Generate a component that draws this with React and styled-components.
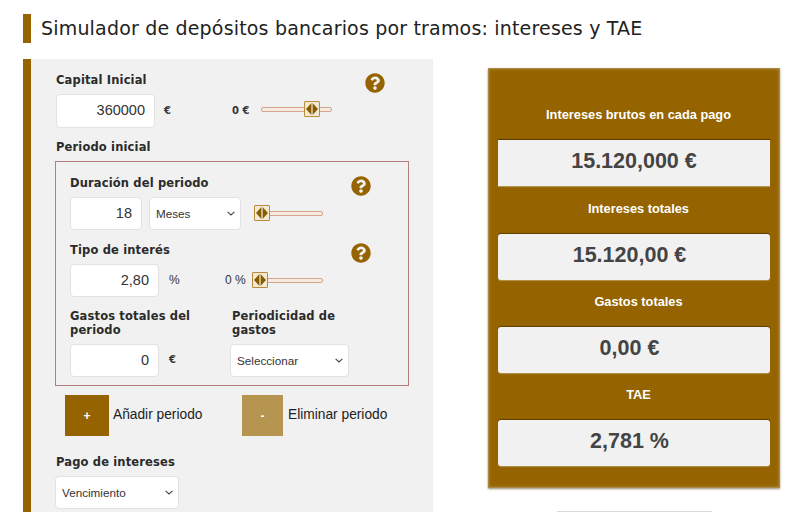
import styled, { createGlobalStyle } from "styled-components";
import { FaQuestionCircle } from "react-icons/fa";

const chevron =
  "data:image/svg+xml,%3Csvg xmlns='http://www.w3.org/2000/svg' width='8' height='5' viewBox='0 0 8 5'%3E%3Cpath d='M.6.8 4 4 7.4.8' fill='none' stroke='%23444' stroke-width='1.1'/%3E%3C/svg%3E";

const GlobalStyle = createGlobalStyle`
  html, body {
    margin: 0;
    padding: 0;
    background: #fff;
    overflow: hidden;
  }
  * { box-sizing: border-box; }
`;

const Page = styled.div`
  width: 800px;
  height: 512px;
  overflow: hidden;
  padding: 14px 0 0 23px;
  font-family: "DejaVu Sans", Verdana, sans-serif;
  color: #222;
`;

const Title = styled.h1`
  margin: 0 0 16px;
  height: 29px;
  border-left: 8px solid #956400;
  padding-left: 10px;
  font-size: 19px;
  font-weight: 400;
  line-height: 29px;
  letter-spacing: 0.18px;
  color: #222;
  white-space: nowrap;
`;

const Columns = styled.div`
  display: flex;
  align-items: flex-start;
  gap: 55px;
`;

const FormPanel = styled.section`
  width: 410px;
  height: 460px;
  flex: none;
  border-left: 8px solid #956400;
  background: #f1f1f1;
  padding: 13px 0 0 25px;
`;

const Label = styled.div`
  height: 14px;
  padding-top: 2px;
  font-size: 11.5px;
  font-weight: 700;
  line-height: 12px;
  letter-spacing: 0.15px;
  color: #2b2b2b;
  margin-top: ${(p) => p.$top || 0}px;
  margin-bottom: 8px;
`;

const LabelHead = styled.div`
  display: flex;
  justify-content: space-between;
  align-items: center;
  height: 14px;
  padding-top: 2px;
  margin-top: ${(p) => p.$top || 0}px;
  margin-bottom: 8px;
  width: ${(p) => p.$width}px;
  font-size: 11.5px;
  font-weight: 700;
  letter-spacing: 0.15px;
  color: #2b2b2b;
`;

const Help = styled(FaQuestionCircle)`
  width: 20px;
  height: 20px;
  margin-top: 6px;
  flex: none;
  color: #956400;
`;

const Row = styled.div`
  display: flex;
  align-items: center;
  height: ${(p) => p.$height || 34}px;
`;

const NumberInput = styled.input`
  width: ${(p) => p.$width}px;
  height: 100%;
  flex: none;
  border: 1px solid #e2e2e2;
  border-radius: 4px;
  background: #fff;
  padding: 0 9px 2px;
  text-align: right;
  font-family: "Liberation Sans", Arial, sans-serif;
  font-size: 14.5px;
  color: #333;
  outline: none;
`;

const Unit = styled.span`
  flex: none;
  width: ${(p) => p.$width}px;
  margin-left: ${(p) => p.$left || 0}px;
  margin-top: -2px;
  font-family: ${(p) => (p.$plain ? '"Liberation Sans", Arial, sans-serif' : "inherit")};
  font-size: ${(p) => (p.$plain ? 12 : 10)}px;
  font-weight: ${(p) => (p.$plain ? 400 : 700)};
  color: #333;
  white-space: nowrap;
`;

const SelectBox = styled.select`
  appearance: none;
  width: ${(p) => p.$width}px;
  height: ${(p) => p.$height || 33}px;
  flex: none;
  margin-left: ${(p) => p.$left || 0}px;
  border: 1px solid #e2e2e2;
  border-radius: 4px;
  background: #fff url("${chevron}") no-repeat right 5px center;
  padding: 0 14px 0 6px;
  font-family: "Liberation Sans", Arial, sans-serif;
  font-size: 11.7px;
  color: #333;
  outline: none;
`;

const SliderWrap = styled.div`
  position: relative;
  flex: none;
  width: ${(p) => p.$width}px;
  height: 16px;
  margin-left: ${(p) => p.$left || 0}px;
  margin-top: ${(p) => p.$top ?? -2}px;
`;

const SliderTrack = styled.div`
  position: absolute;
  left: 0;
  right: 0;
  top: 6px;
  height: 5px;
  border: 1px solid #d3a58c;
  border-radius: 2px;
  background: #f6e9e0;
`;

const SliderThumb = styled.div`
  position: absolute;
  left: ${(p) => p.$at}px;
  top: 0;
  width: 16px;
  height: 16px;
  border: 1px solid #b98a3a;
  border-radius: 1px;
  background: #f3ead6;
  display: flex;
  align-items: center;
  justify-content: center;
`;

const PeriodBox = styled.div`
  width: 354px;
  margin: 0 0 0 -1px;
  border: 1px solid #b77d7d;
  padding: 13px 0 8px 14px;
`;

const TwoCols = styled.div`
  display: grid;
  grid-template-columns: 160px 119px;
  margin-top: 11px;
`;

const ColLabel = styled.div`
  height: 28px;
  padding-top: 1px;
  font-size: 11.5px;
  font-weight: 700;
  line-height: 14px;
  letter-spacing: 0.15px;
  color: #2b2b2b;
  margin: 0 0 8px ${(p) => p.$left || 0}px;
`;

const Actions = styled.div`
  display: flex;
  align-items: center;
  height: 41px;
  margin: 9px 0 18px 9px;
`;

const SquareButton = styled.button`
  width: ${(p) => p.$width}px;
  height: 41px;
  flex: none;
  border: none;
  padding: 0;
  background: ${(p) => p.$bg};
  color: #fff;
  font-family: "Liberation Sans", Arial, sans-serif;
  font-size: 12px;
  font-weight: 700;
`;

const ActionLabel = styled.span`
  flex: none;
  width: ${(p) => p.$width}px;
  margin-left: ${(p) => p.$left}px;
  margin-top: -3px;
  font-family: "Liberation Sans", Arial, sans-serif;
  font-size: 13.75px;
  color: #222;
  white-space: nowrap;
`;

const SidePanel = styled.div`
  flex: none;
  margin-top: 9px;
  width: 292px;
`;

const ResultCard = styled.aside`
  height: 420px;
  background: #956400;
  border: 1px solid #ab8a48;
  box-shadow: 0 1px 2px rgba(70, 45, 0, 0.55), inset 0 0 3px rgba(255, 255, 255, 0.25);
  padding: 36px 9px 0;
`;

const ResultLabel = styled.div`
  height: 20px;
  margin-bottom: 15px;
  padding-left: 9px;
  text-align: center;
  font-family: "Liberation Sans", Arial, sans-serif;
  font-size: 12.8px;
  font-weight: 700;
  line-height: 20px;
  color: #fff;
`;

const ResultValue = styled.div`
  height: 46px;
  margin-bottom: ${(p) => (p.$square ? 13 : 12)}px;
  padding-right: ${(p) => (p.$square ? 0 : 9)}px;
  border-radius: ${(p) => (p.$square ? 0 : 3)}px;
  background: #f1f1f1;
  box-shadow: 0 -1px 1px rgba(60, 40, 0, 0.6), 0 1px 1px rgba(255, 255, 255, 0.3);
  text-align: center;
  font-family: "Liberation Sans", Arial, sans-serif;
  font-size: 21.5px;
  font-weight: 700;
  line-height: 42px;
  color: #444;
`;

const NextBox = styled.div`
  width: 155px;
  height: 10px;
  margin: 23px 0 0 69px;
  border-top: 1px solid #d9d9d9;
`;

function Slider({ width, left, at, top }) {
  return (
    <SliderWrap $width={width} $left={left} $top={top}>
      <SliderTrack />
      <SliderThumb $at={at}>
        <svg width="12" height="12" viewBox="0 0 12 12">
          <path d="M5.4 0v12L0 6z" fill="#8a5c00" />
          <path d="M6.6 0v12L12 6z" fill="#8a5c00" />
        </svg>
      </SliderThumb>
    </SliderWrap>
  );
}

const results = [
  { label: "Intereses brutos en cada pago", value: "15.120,000 €", square: true },
  { label: "Intereses totales", value: "15.120,00 €" },
  { label: "Gastos totales", value: "0,00 €" },
  { label: "TAE", value: "2,781 %" },
];

export default function App() {
  return (
    <Page>
      <GlobalStyle />
      <Title>Simulador de depósitos bancarios por tramos: intereses y TAE</Title>
      <Columns>
        <FormPanel>
          <LabelHead $width={329}>
            Capital Inicial
            <Help />
          </LabelHead>
          <Row>
            <NumberInput $width={99} defaultValue="360000" />
            <Unit $width={68} $left={9}>€</Unit>
            <Unit $width={29}>0 €</Unit>
            <Slider width={71} at={43} top={-4} />
          </Row>

          <Label $top={11}>Periodo inicial</Label>
          <PeriodBox>
            <LabelHead $width={301}>
              Duración del periodo
              <Help />
            </LabelHead>
            <Row $height={33}>
              <NumberInput $width={72} defaultValue="18" />
              <SelectBox $width={92} $left={7} defaultValue="Meses">
                <option>Meses</option>
                <option>Años</option>
              </SelectBox>
              <Slider width={69} left={13} at={0} />
            </Row>

            <LabelHead $width={301} $top={12}>
              Tipo de interés
              <Help />
            </LabelHead>
            <Row $height={33}>
              <NumberInput $width={89} defaultValue="2,80" />
              <Unit $width={56} $left={10} $plain>%</Unit>
              <Unit $width={27} $plain>0 %</Unit>
              <Slider width={71} at={0} />
            </Row>

            <TwoCols>
              <ColLabel>Gastos totales del periodo</ColLabel>
              <ColLabel $left={2}>Periodicidad de gastos</ColLabel>
              <Row $height={33}>
                <NumberInput $width={89} defaultValue="0" />
                <Unit $width={20} $left={10}>€</Unit>
              </Row>
              <SelectBox $width={119} defaultValue="Seleccionar">
                <option>Seleccionar</option>
                <option>Mensual</option>
                <option>Anual</option>
              </SelectBox>
            </TwoCols>
          </PeriodBox>

          <Actions>
            <SquareButton $width={44} $bg="#956400">+</SquareButton>
            <ActionLabel $width={129} $left={4}>Añadir periodo</ActionLabel>
            <SquareButton $width={41} $bg="#b59550">-</SquareButton>
            <ActionLabel $width={100} $left={5}>Eliminar periodo</ActionLabel>
          </Actions>

          <Label>Pago de intereses</Label>
          <SelectBox $width={124} $left={-1} defaultValue="Vencimiento">
            <option>Vencimiento</option>
            <option>Mensual</option>
          </SelectBox>
        </FormPanel>

        <SidePanel>
          <ResultCard>
            {results.map((item) => (
              <div key={item.label}>
                <ResultLabel>{item.label}</ResultLabel>
                <ResultValue $square={item.square}>{item.value}</ResultValue>
              </div>
            ))}
          </ResultCard>
          <NextBox />
        </SidePanel>
      </Columns>
    </Page>
  );
}
